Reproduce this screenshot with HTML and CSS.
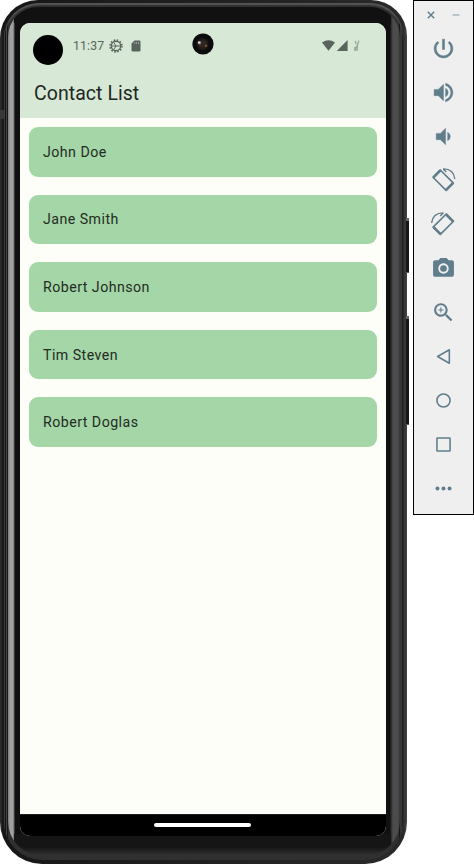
FILE: index.html
```html
<!DOCTYPE html>
<html lang="en">
<head>
<meta charset="utf-8">
<title>Contact List</title>
<link rel="stylesheet" href="styles.css">
</head>
<body>
<div class="desk">
  <div class="phone">
    <i class="key key-power"></i><i class="key key-volume"></i>
    <div class="shell"><div class="rim"><div class="bezel">
      <main class="screen">
        <header class="appbar">
          <div class="status">
            <span class="dot"></span>
            <span class="clock">11:37</span>
            <svg class="gear" viewBox="0 0 14 14"><circle cx="7" cy="7" r="6" fill="none" stroke="currentColor" stroke-width="1.5" stroke-dasharray="1.6 1.54"/><circle cx="7" cy="7" r="4.7" fill="none" stroke="currentColor" stroke-width="1.4"/><path d="M3 7h8M7 7l-2.300 3.700M7 7L4.700 3.300" stroke="currentColor" stroke-width="1"/></svg>
            <svg class="card-icon" viewBox="0 0 10 12"><path fill="currentColor" fill-rule="evenodd" d="M3.500.5H8.400Q9.500.5 9.500 1.600V10.400Q9.500 11.500 8.400 11.500H1.600Q.5 11.500.5 10.400V3.500ZM3.600 2.200V3.700H4.200V2.200ZM5.300 2.200V3.700H5.900V2.200ZM7 2.200V3.700H7.600V2.200Z"/></svg>
            <svg class="signals" viewBox="0 0 39 14"><path fill="currentColor" d="M0 3.600Q6.500-1 13 3.600L6.500 11.700ZM25.600 1v11H14.800Z"/><path fill="none" stroke="#9ba69b" stroke-width="1.300" d="M33.300 1.800l.8 3.500M36.800 1.500l-1.500 5.200-1.600 2v3M32.800 8v4M35.300 7v4.700"/></svg>
            <svg class="camera" viewBox="0 0 22 22"><circle cx="11" cy="11" r="10.600" fill="#0b0c0b"/><circle cx="10.500" cy="11" r="6" fill="#211c19"/><circle cx="10.800" cy="11" r="3.800" fill="#302521"/><circle cx="7.400" cy="9.700" r="1.700" fill="#96918a"/><circle cx="7" cy="9.500" r=".8" fill="#fff"/><circle cx="14" cy="12.800" r="1" fill="#a0622f"/></svg>
          </div>
          <h1>Contact List</h1>
        </header>
        <ul class="contacts">
          <li>John Doe</li><li>Jane Smith</li><li>Robert Johnson</li><li>Tim Steven</li><li>Robert Doglas</li>
        </ul>
        <footer class="navbar"><span></span></footer>
      </main>
    </div></div></div>
    <i class="antenna"></i>
  </div>
  <aside class="tools">
    <div class="window"><svg viewBox="0 0 8 8"><path d="M.8.8l6.400 6.400M7.200.8L.8 7.200"/></svg><svg viewBox="0 0 8 8"><path stroke="#a3b3bb" d="M.5 4h7"/></svg></div>
    <svg viewBox="0 0 24 24"><path d="M13 3h-2v10h2V3zm4.830 2.170l-1.420 1.420C17.990 7.860 19 9.810 19 12c0 3.870-3.130 7-7 7s-7-3.130-7-7c0-2.190 1.010-4.140 2.580-5.420L6.170 5.170C4.230 6.820 3 9.260 3 12c0 4.970 4.030 9 9 9s9-4.030 9-9c0-2.740-1.230-5.180-3.170-6.830z" stroke="currentColor" stroke-width=".5"/></svg>
    <svg viewBox="0 0 24 24"><path d="M3 9v6h4l5 5V4L7 9H3zm13.500 3c0-1.770-1.020-3.290-2.500-4.030v8.050c1.480-.73 2.500-2.250 2.500-4.020zM14 3.230v2.060c2.890.86 5 3.540 5 6.710s-2.110 5.850-5 6.710v2.060c4.010-.91 7-4.490 7-8.770s-2.990-7.860-7-8.770z" stroke="currentColor" stroke-width=".4"/></svg>
    <svg viewBox="0 0 24 24"><path d="M18.500 12c0-1.770-1.020-3.290-2.500-4.030v8.050c1.480-.73 2.500-2.250 2.500-4.020zM5 9v6h4l5 5V4L9 9H5z" stroke="currentColor" stroke-width=".4"/></svg>
    <svg viewBox="0 0 24 24"><g fill="none" stroke="currentColor"><path stroke-width="1.600" stroke-linejoin="round" d="M8.900 1.900L1.900 8.900 14.500 21.500l7-7Z"/><path stroke-width="2.400" d="M8.900 2.400L2.400 8.900M14.500 21l6.500-6.500"/><path stroke-width="1.300" d="M11.500.9q10.200-.2 11.400 9.700M11.700.9l3 3"/></g></svg>
    <svg viewBox="0 0 24 24"><g transform="matrix(-1 0 0 1 23.500 0)" fill="none" stroke="currentColor"><path stroke-width="1.600" stroke-linejoin="round" d="M8.900 1.900L1.900 8.900 14.500 21.500l7-7Z"/><path stroke-width="2.400" d="M8.900 2.400L2.400 8.900M14.500 21l6.500-6.500"/><path stroke-width="1.300" d="M11.500.9q10.200-.2 11.400 9.700M11.700.9l3 3"/></g></svg>
    <svg viewBox="0 0 24 24"><circle cx="12" cy="12" r="3.200"/><path d="M9 2L7.170 4H4c-1.100 0-2 .9-2 2v12c0 1.100.9 2 2 2h16c1.100 0 2-.9 2-2V6c0-1.100-.9-2-2-2h-3.170L15 2H9zm3 15c-2.760 0-5-2.240-5-5s2.240-5 5-5 5 2.240 5 5-2.240 5-5 5z"/></svg>
    <svg viewBox="0 0 24 24"><path d="M15.500 14h-.79l-.28-.27C15.410 12.590 16 11.110 16 9.500 16 5.910 13.090 3 9.500 3S3 5.910 3 9.500 5.910 16 9.500 16c1.610 0 3.090-.59 4.230-1.570l.27.28v.79l5 4.990L20.490 19l-4.990-5zm-6 0C7.010 14 5 11.990 5 9.500S7.010 5 9.500 5 14 7.010 14 9.500 11.990 14 9.500 14zm.5-7H9v2H7v1h2v2h1v-2h2V9h-2V7z"/></svg>
    <svg viewBox="0 0 24 24"><path fill="none" stroke="currentColor" stroke-width="1.500" stroke-linejoin="round" d="M17.600 5.500v13L6.300 12Z"/></svg>
    <svg viewBox="0 0 24 24"><circle cx="12" cy="12" r="6.300" fill="none" stroke="currentColor" stroke-width="1.500"/></svg>
    <svg viewBox="0 0 24 24"><rect x="5.700" y="5.700" width="12.600" height="12.600" rx=".6" fill="none" stroke="currentColor" stroke-width="1.500"/></svg>
    <svg viewBox="0 0 24 24"><circle cx="6.200" cy="12" r="1.900"/><circle cx="12" cy="12" r="1.900"/><circle cx="17.800" cy="12" r="1.900"/></svg>
  </aside>
</div>
</body>
</html>
```
FILE: styles.css
```css
* { box-sizing: border-box; }
body { margin: 0; background: #fff; font-family: Roboto, sans-serif; overflow: hidden; }
.desk { display: flex; align-items: flex-start; gap: 5px; width: 474px; height: 864px; }
.phone { position: relative; width: 408px; height: 864px; flex: none; }
.shell {
  width: 407px; height: 864px; padding: 3px 4px 4px;
  border-radius: 38px 36px 42px 42px;
  background: linear-gradient(90deg, #303030, #171717 3px, #202020 50%, #292929 403px, #454545);
}
.rim {
  height: 100%; padding: 4px 3px 4px 4px; border-radius: 35px 33px 38px 38px;
  background: linear-gradient(90deg, #3b3b3b 0 1px, #111 1px 2px, #444 2px 3px, #191919 3px 4px, #303030 4px 395px, #161616 395px 396px, #363636 396px 398px, #1b1b1b 398px);
  box-shadow: inset 0 2px 1px #555;
}
.bezel {
  height: 100%; padding: 16px 14px 17px 12px; border-radius: 30px 30px 35px 35px;
  background:
    linear-gradient(#111 0 16px, transparent 16px 827px, #151515 827px 840px, #333 849px) 6px 0 / 377px 100% no-repeat,
    linear-gradient(90deg, #777, #a1a1a1 2px 5px, #666 6px, #101010 7px 382px, #292929 383px, #4c4c4c 385px 390px, #333 392px);
}
.screen {
  display: flex; flex-direction: column; width: 366px; height: 813px;
  overflow: hidden; border-radius: 10px; background: #fcfef7;
}
.appbar { height: 95px; flex: none; background: #d7e8d7; color: #202721; }
.status { position: relative; display: flex; align-items: center; height: 45px; padding-left: 13px; color: #59645b; }
.dot { width: 30px; height: 30px; margin-top: 9px; border-radius: 50%; background: #000; }
.clock { width: 36px; margin-left: 10px; font-size: 12.3px; letter-spacing: .15px; }
.gear { width: 14px; height: 14px; }
.card-icon { width: 10px; height: 12px; margin-left: 8px; }
.signals { width: 39px; height: 14px; margin-left: auto; margin-right: 25px; }
.camera { position: absolute; left: 172px; top: 10px; width: 22px; height: 22px; }
h1 { margin: 13px 0 0 14px; font-size: 19.5px; line-height: 26px; font-weight: 400; letter-spacing: .05px; }
.contacts { display: flex; flex: 1; flex-direction: column; gap: 17.9px; margin: 0; padding: 9px 9px 0 8.5px; list-style: none; }
.contacts li {
  display: flex; align-items: center; height: 49.7px; padding: 0 14.5px; border-radius: 9px;
  background: #a5d6a7; color: #222c23; font-size: 14.2px; letter-spacing: .46px;
}
.navbar { display: flex; justify-content: center; height: 22px; flex: none; padding-top: 8px; background: #000; border-top: 1px solid #1b1e1b; }
.navbar span { width: 97px; height: 4px; margin-right: 1px; border-radius: 2px; background: #fff; }
.key { position: absolute; right: -1px; width: 3px; background: #171512; border-top: 3px solid #666; border-bottom: 1px solid #555; }
.key-power { top: 218px; height: 55px; }
.key-volume { top: 316px; height: 109px; }
.antenna { position: absolute; left: 0; top: 110px; width: 4px; height: 9px; background: #383838; }
.tools {
  display: flex; flex-direction: column; align-items: center; gap: 19px;
  width: 61px; height: 515px; border: 1px solid #000; background: #efefef; color: #607d8b;
}
.tools > svg { display: block; position: relative; left: -.5px; top: .6px; width: 25px; height: 25px; flex: none; fill: currentColor; }
.window { display: flex; gap: 17px; height: 15px; padding-top: 10px; }
.window svg { width: 8px; height: 8px; fill: none; stroke: currentColor; stroke-width: 1.4; }
```
